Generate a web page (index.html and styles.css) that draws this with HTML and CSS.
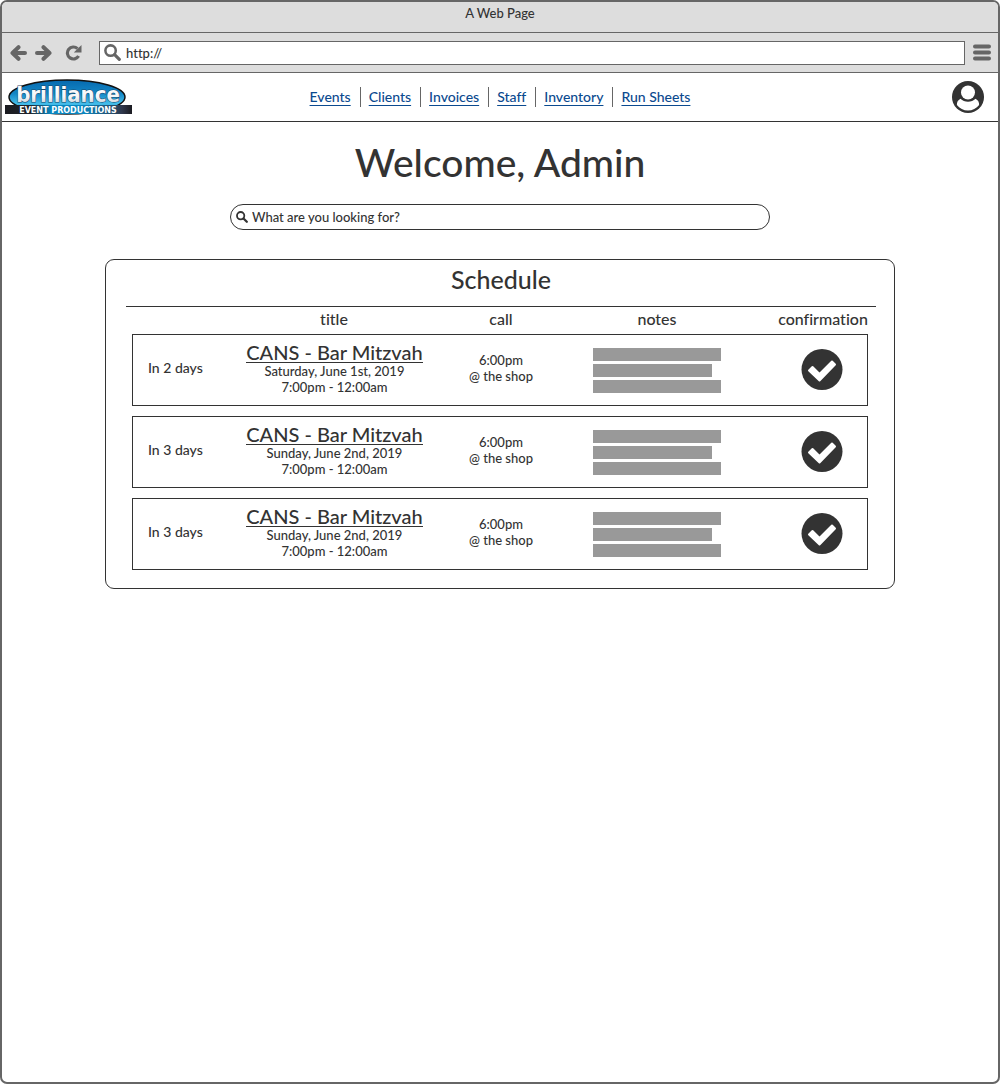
FILE: index.html
```html
<!DOCTYPE html>
<html lang="en">
<head>
<meta charset="utf-8">
<meta name="viewport" content="width=device-width, initial-scale=1">
<title>A Web Page</title>
<link rel="stylesheet" href="styles.css">
</head>
<body>
<svg class="sprite" aria-hidden="true">
  <symbol id="arrow" viewBox="0 0 17 16"><path d="M15 8H2.500M8.500 2.200L2.500 8l6 5.800" fill="none" stroke="currentColor" stroke-width="4" stroke-linecap="round" stroke-linejoin="round"/></symbol>
  <symbol id="magnifier" viewBox="0 0 16 16"><circle cx="6.200" cy="6.200" r="4.900" fill="none" stroke="currentColor" stroke-width="2.400"/><path d="M10 10l4.400 4.400" stroke="currentColor" stroke-width="3" stroke-linecap="round"/></symbol>
  <symbol id="check" viewBox="0 0 42 42"><circle cx="21" cy="20.500" r="20.500" fill="currentColor"/><path d="M8 21.500L11.500 18L18.500 25L31 12.500L34 15.500L18.500 31.500z" fill="#fff" stroke="#fff" stroke-width="2" stroke-linejoin="round"/></symbol>
</svg>
<div class="window">
  <div class="titlebar">A Web Page</div>
  <div class="toolbar">
    <button class="tool" type="button" aria-label="Back"><svg width="17" height="16"><use href="#arrow"/></svg></button>
    <button class="tool" type="button" aria-label="Forward"><svg class="flip" width="17" height="16"><use href="#arrow"/></svg></button>
    <button class="tool reload" type="button" aria-label="Reload"><svg width="17" height="16" viewBox="0 0 17 16"><path d="M12.500 3.600A6 6 0 1 0 13.600 11" fill="none" stroke="currentColor" stroke-width="3.200"/><path d="M16.500 0v7.500H8.800z" fill="currentColor"/></svg></button>
    <label class="address">
      <svg width="17" height="17"><use href="#magnifier"/></svg>
      <input type="text" value="http://" aria-label="Address">
    </label>
    <button class="tool" type="button" aria-label="Menu"><svg width="18" height="17" viewBox="0 0 18 17"><path d="M2 2.500h14M2 8.500h14M2 14.500h14" stroke="currentColor" stroke-width="4" stroke-linecap="round"/></svg></button>
  </div>
  <header class="site-header">
    <a class="logo" href="#" aria-label="Brilliance Event Productions">
      <svg width="128" height="36" viewBox="0 0 128 36">
        <defs>
          <linearGradient id="oval" x1="0" y1="0" x2="0" y2="1"><stop offset="0" stop-color="#0669ae"/><stop offset=".4" stop-color="#1387c6"/><stop offset=".7" stop-color="#45bdea"/><stop offset="1" stop-color="#0878b8"/></linearGradient>
          <linearGradient id="band"><stop offset="0" stop-color="#1b1b20"/><stop offset=".2" stop-color="#20242c"/><stop offset=".36" stop-color="#0b86bf"/><stop offset=".62" stop-color="#0b86bf"/><stop offset=".92" stop-color="#30384d"/><stop offset="1" stop-color="#1b1b20"/></linearGradient>
          <linearGradient id="chrome" x1="0" y1="0" x2="0" y2="1"><stop offset="0" stop-color="#fff"/><stop offset=".6" stop-color="#f4f6f8"/><stop offset="1" stop-color="#b9c3cc"/></linearGradient>
        </defs>
        <ellipse cx="62" cy="18" rx="58" ry="17" fill="url(#oval)" stroke="#111" stroke-width="1.500"/>
        <rect x="0" y="26" width="127" height="9" fill="url(#band)"/>
        <text class="logo-name" x="63" y="23" text-anchor="middle" fill="url(#chrome)">brilliance</text>
        <text class="logo-sub" x="63" y="34" text-anchor="middle">EVENT PRODUCTIONS</text>
      </svg>
    </a>
    <nav class="nav">
      <a href="#">Events</a><a href="#">Clients</a><a href="#">Invoices</a><a href="#">Staff</a><a href="#">Inventory</a><a href="#">Run Sheets</a>
    </nav>
    <button class="account" type="button" aria-label="Account">
      <svg width="32" height="32" viewBox="0 0 32 32"><circle cx="16" cy="16" r="16" fill="currentColor"/><circle cx="16" cy="11.500" r="7" fill="#fff"/><path d="M8.500 17.800C5.800 19 4.800 21.500 4.900 24c2.600 3.400 6.700 5.600 11.100 5.600s8.500-2.200 11.100-5.600c.1-2.500-.9-5-3.600-6.200-2 1.900-4.600 3-7.500 3s-5.500-1.100-7.500-3z" fill="#fff"/></svg>
    </button>
  </header>
  <main class="content">
    <h1>Welcome, Admin</h1>
    <label class="search">
      <svg width="12" height="12"><use href="#magnifier"/></svg>
      <input type="text" placeholder="What are you looking for?" aria-label="Search">
    </label>
    <section class="panel">
      <h2>Schedule</h2>
      <table class="schedule">
        <thead>
          <tr><td></td><th scope="col">title</th><th scope="col">call</th><th scope="col">notes</th><th scope="col">confirmation</th></tr>
        </thead>
        <tbody>
          <tr>
            <td class="when">In 2 days</td>
            <td class="what"><a class="event" href="#">CANS - Bar Mitzvah</a><p>Saturday, June 1st, 2019</p><p>7:00pm - 12:00am</p></td>
            <td class="call">6:00pm<br>@ the shop</td>
            <td><div class="notes"><span></span><span></span><span></span></div></td>
            <td><svg class="check" width="42" height="42" role="img" aria-label="Confirmed"><use href="#check"/></svg></td>
          </tr>
          <tr>
            <td class="when">In 3 days</td>
            <td class="what"><a class="event" href="#">CANS - Bar Mitzvah</a><p>Sunday, June 2nd, 2019</p><p>7:00pm - 12:00am</p></td>
            <td class="call">6:00pm<br>@ the shop</td>
            <td><div class="notes"><span></span><span></span><span></span></div></td>
            <td><svg class="check" width="42" height="42" role="img" aria-label="Confirmed"><use href="#check"/></svg></td>
          </tr>
          <tr>
            <td class="when">In 3 days</td>
            <td class="what"><a class="event" href="#">CANS - Bar Mitzvah</a><p>Sunday, June 2nd, 2019</p><p>7:00pm - 12:00am</p></td>
            <td class="call">6:00pm<br>@ the shop</td>
            <td><div class="notes"><span></span><span></span><span></span></div></td>
            <td><svg class="check" width="42" height="42" role="img" aria-label="Confirmed"><use href="#check"/></svg></td>
          </tr>
        </tbody>
      </table>
    </section>
  </main>
</div>
</body>
</html>
```
FILE: styles.css
```css
* { box-sizing: border-box; }

body {
  margin: 0;
  background: #fff;
  color: #333;
  font: 500 13px/16px Lato, "Open Sans", sans-serif;
  font-variant-ligatures: none;
}

h1, h2, p { margin: 0; font-weight: 500; }
svg { display: block; flex: none; }
button { padding: 0; border: 0; background: none; color: inherit; }
input { flex: 1; min-width: 0; padding: 0; border: 0; outline: 0; background: none; color: inherit; font: inherit; }
input::placeholder { color: inherit; opacity: 1; }

.sprite { position: absolute; width: 0; height: 0; }

.window {
  min-height: 100vh;
  border: 2px solid #666;
  border-radius: 7px;
  overflow: hidden;
}

.titlebar {
  height: 31px;
  padding-top: 3px;
  border-bottom: 1px solid #666;
  background: #ddd;
  text-align: center;
}

.toolbar {
  display: flex;
  align-items: center;
  gap: 8px;
  height: 40px;
  padding: 0 7px 0 8px;
  border-bottom: 1px solid #666;
  background: #ddd;
  color: #666;
}
.flip { transform: scaleX(-1); }
.reload { margin: 0 9px 0 5px; }

.address {
  flex: 1;
  display: flex;
  align-items: center;
  gap: 5px;
  height: 24px;
  padding: 0 4px;
  border: 1px solid #666;
  background: #fff;
}
.address input { color: #333; }

.site-header {
  display: grid;
  grid-template-columns: 1fr auto 1fr;
  align-items: center;
  height: 49px;
  padding: 0 3px;
  border-bottom: 1px solid #333;
}
.logo-name {
  font: bold 22px "DejaVu Sans Condensed", "DejaVu Sans", sans-serif;
  stroke: #174668;
  stroke-width: 1px;
  paint-order: stroke;
}
.logo-sub { font: bold 8px "DejaVu Sans", sans-serif; fill: #fff; }

.nav { display: flex; }
.nav a {
  padding: 2px 0;
  color: #0b4a8f;
  font-size: 14px;
  text-underline-offset: 3px;
}
.nav a + a {
  margin-left: 9px;
  padding-left: 8px;
  border-left: 1px solid #666;
}
.account { justify-self: end; margin-right: 11px; }
.account svg { color: #333; }

.content { padding: 18px 24px; }
h1 { font-size: 39px; line-height: 44px; text-align: center; }

.search {
  display: flex;
  align-items: center;
  gap: 4px;
  max-width: 540px;
  height: 26px;
  margin: 20px auto 29px;
  padding: 0 5px;
  border: 1px solid #333;
  border-radius: 13px;
}

.panel {
  max-width: 790px;
  margin: 0 auto;
  padding: 0 18px 18px 20px;
  border: 1px solid #333;
  border-radius: 9px;
}
h2 {
  padding: 7px 0 15px;
  border-bottom: 1px solid #333;
  font-size: 25px;
  line-height: 24px;
  text-align: center;
}

.schedule { display: block; padding: 0 8px 0 6px; }
.schedule thead { display: block; padding-bottom: 3px; }
.schedule tbody { display: flex; flex-direction: column; gap: 10px; }
.schedule tr {
  display: grid;
  grid-template-columns: 70fr 264fr 70fr 242fr 90fr;
  align-items: center;
}
.schedule tbody tr { height: 72px; border: 1px solid #333; }
.schedule th, .schedule td { min-width: 0; padding: 0; text-align: center; white-space: nowrap; }
.schedule th { font-size: 16px; line-height: 24px; font-weight: 500; }
.schedule .when { padding: 0 0 4px 15px; font-size: 14px; text-align: left; }
.schedule .what, .schedule .call { padding-bottom: 4px; }

.event {
  display: inline-block;
  border-bottom: 1px solid #333;
  color: inherit;
  font-size: 20px;
  line-height: 20px;
  text-decoration: none;
}

.notes { display: grid; gap: 3px; width: 128px; margin: 0 auto; }
.notes span { height: 13px; background: #999; }
.notes span:nth-child(2) { margin-right: 9px; }
.check { margin: 0 auto; }
```
